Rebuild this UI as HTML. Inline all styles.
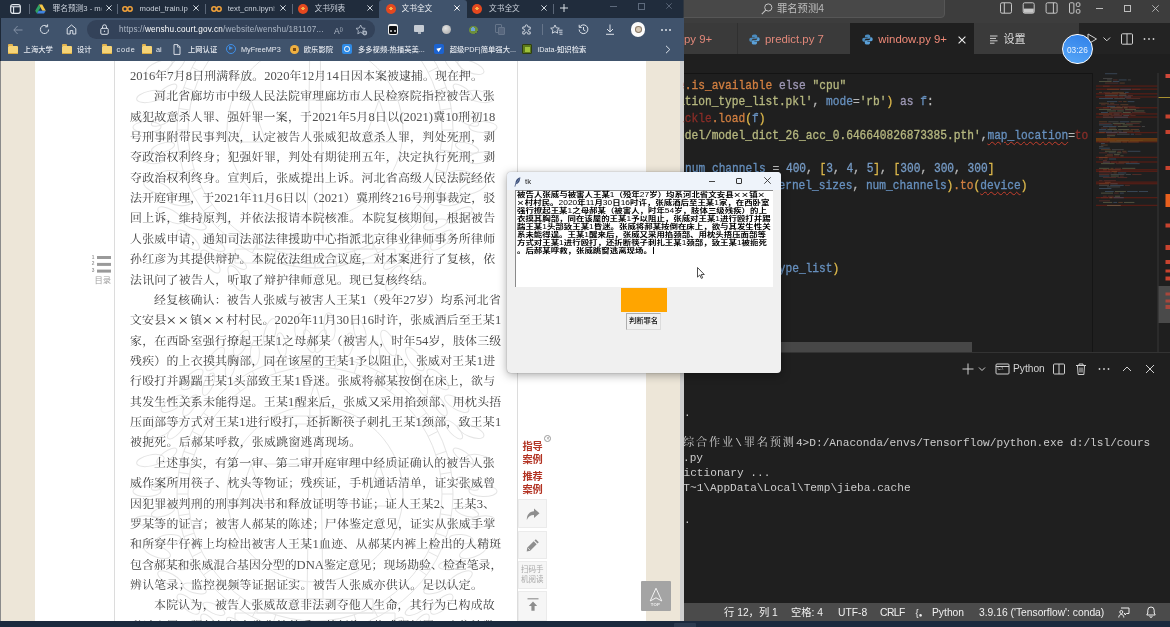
<!DOCTYPE html>
<html lang="zh-CN">
<head>
<meta charset="utf-8">
<title>screenshot</title>
<style>
*{box-sizing:border-box;margin:0;padding:0}
html,body{width:1170px;height:627px;overflow:hidden;background:#1e1e1e}
body{position:relative;font-family:"Liberation Sans","Noto Sans CJK SC",sans-serif;}
.abs{position:absolute}
#edge{position:absolute;left:0;top:0;width:684px;height:621px;background:#fff;overflow:hidden}
#tabbar{position:absolute;left:0;top:0;width:684px;height:18px;background:#202c3c}
#toolbar{position:absolute;left:0;top:18px;width:684px;height:43px;background:#40536c}
#page{position:absolute;left:0;top:61px;width:684px;height:560px;background:#fff;overflow:hidden}
.beige{position:absolute;background:#ede6d8}
.dl{position:absolute;height:20px;line-height:20px;font-family:"Liberation Serif","Noto Serif CJK SC",serif;font-size:11.35px;color:#3c3c3c;white-space:nowrap;text-align:justify;text-align-last:justify;font-weight:400;transform:scaleX(1.049);transform-origin:0 0}
.d{color:#505050;font-size:1.06em}
.fw{display:inline-block;width:1em;text-align:center;font-size:1.5em;line-height:0;vertical-align:-.08em}
.dl .fw{width:.6667em}.tl .fw{width:.6667em;font-weight:400;font-size:1.4em}.td{font-weight:400}
.tl{position:absolute;height:10px;line-height:10px;font-family:"Liberation Sans","Noto Sans CJK SC",sans-serif;font-size:7.1px;color:#000;white-space:nowrap;text-align:justify;text-align-last:justify;font-weight:700;transform:scaleX(1.187);transform-origin:0 0}
#vsc{position:absolute;left:684px;top:0;width:486px;height:621px;background:#1e1e1e;overflow:hidden}
#taskbar{position:absolute;left:0;top:621px;width:1170px;height:6px;background:#1b2a3e}
#tk{position:absolute;left:507px;top:172px;width:274.3px;height:200.6px;background:#f0f0f0;border-radius:4px;box-shadow:0 2px 10px rgba(0,0,0,.35),0 0 1px rgba(0,0,0,.5);overflow:hidden}

#tabbar .t{position:absolute;top:0;height:17px;line-height:17px;font-size:7.7px;color:#c9d0da;white-space:nowrap;overflow:hidden}
#tabbar .x{position:absolute;top:0;height:17px;line-height:17px;font-size:9px;color:#dfe4ea;width:10px;text-align:center;margin-left:-5px}
#tabbar .dv{position:absolute;top:4px;height:10px;width:1px;background:#5b6778}
#tabbar .fav{position:absolute;top:4px;width:10px;height:10px;margin-left:-5px;border-radius:50%}
.court{background:radial-gradient(circle at 50% 45%,#f7b24a 0 22%,#e4481f 24% 100%)}
.colab{position:absolute;top:5.5px;height:6px;width:11px;margin-left:-5.5px}
.ico{position:absolute;overflow:visible}
.bm{position:absolute;top:43px;height:13px;line-height:13px;font-size:7.3px;color:#e6eaf0;white-space:nowrap;font-weight:500}
.fold{position:absolute;top:44.5px;width:10px;height:8.5px;margin-left:-5px;background:#f6d477;border-radius:1px;box-shadow:inset 0 -1px 0 #d9a93f}
.fold:before{content:"";position:absolute;left:0;top:-1.5px;width:4.5px;height:2px;background:#e3b34d;border-radius:1px 1px 0 0}
.bmi{position:absolute;top:44px;width:10px;height:10px;margin-left:-5px;border-radius:2px}

#vsc .ui{position:absolute;white-space:nowrap;color:#d0d0d0;font-size:10.4px}
.code{position:absolute;left:0;height:17px;line-height:17px;font-family:"Liberation Mono",monospace;font-size:12.4px;transform:scaleX(.9046);transform-origin:0 0;white-space:pre;color:#d4d4d4;opacity:.9;-webkit-text-stroke:.3px currentColor}
.term{position:absolute;left:0;height:15px;line-height:15px;font-family:"Liberation Mono","Noto Serif CJK SC",monospace;font-size:11.15px;white-space:pre;color:#cccccc}
.o{color:#e58a45}.k{color:#aca6c6}.s{color:#c6c88a}.b{color:#6f9dd0}.r{color:#962f29}.y{color:#f0c850}.p{color:#c8c8c8}.n{color:#7fa8d6}
.sq{text-decoration:underline wavy #d8432f;text-decoration-thickness:.8px;text-underline-offset:2px}
.sb{position:absolute;top:604.4px;height:18px;line-height:18px;font-size:10.3px;color:#f0f0f0;white-space:nowrap}

.rc{position:absolute;left:522.5px;width:22px;font-size:10.2px;line-height:13.2px;font-weight:700;color:#b23222;white-space:nowrap;letter-spacing:-.2px}
.rb{position:absolute;left:518px;width:28.5px;background:#f6f6f6;border:1px solid #ebebeb}
</style>
</head>
<body style="will-change:transform">
<div id="edge">
  <div id="tabbar">
    <svg class="ico" style="left:9.5px;top:3.5px" width="11" height="10" viewBox="0 0 11 10"><rect x="0.7" y="0.7" width="9.6" height="8.6" rx="2" fill="none" stroke="#e3e8ee" stroke-width="1.2"/><path d="M0.7 2.8H10.3M3.6 2.8V9.3" stroke="#e3e8ee" stroke-width="1.1" fill="none"/></svg>
    <div class="dv" style="left:29px"></div>
    <svg class="ico" style="left:35px;top:3.5px" width="11" height="10" viewBox="0 0 11 10"><path d="M3.8 0.5h3.4l3.6 6.2H7.4z" fill="#f6c646"/><path d="M3.8 0.5L0.2 6.7l1.7 2.9 3.6-6.2z" fill="#2fa463"/><path d="M1.9 9.6l1.7-2.9h7.2L9.1 9.6z" fill="#3f83e0"/></svg>
    <div class="t" style="left:52.5px;width:49px">罪名预测3 - m<span style="opacity:.45">o</span></div>
    <svg class="ico" style="left:105.5px;top:5.3px" width="6" height="6" viewBox="0 0 6 6"><path d="M0.4 0.4l5.2 5.2M5.6 0.4L0.4 5.6" stroke="#d9dfe6" stroke-width=".95"/></svg>
    <div class="dv" style="left:117px"></div>
    <svg class="colab" style="left:127.5px" viewBox="0 0 11 6"><circle cx="3" cy="3" r="2.2" fill="none" stroke="#f2a23a" stroke-width="1.5"/><circle cx="8" cy="3" r="2.2" fill="none" stroke="#f2a23a" stroke-width="1.5"/></svg>
    <div class="t" style="left:139.5px;width:48px">model_train.ip<span style="opacity:.45">y</span></div>
    <svg class="ico" style="left:192.6px;top:5.3px" width="6" height="6" viewBox="0 0 6 6"><path d="M0.4 0.4l5.2 5.2M5.6 0.4L0.4 5.6" stroke="#d9dfe6" stroke-width=".95"/></svg>
    <div class="dv" style="left:204.5px"></div>
    <svg class="colab" style="left:216px" viewBox="0 0 11 6"><circle cx="3" cy="3" r="2.2" fill="none" stroke="#f2a23a" stroke-width="1.5"/><circle cx="8" cy="3" r="2.2" fill="none" stroke="#f2a23a" stroke-width="1.5"/></svg>
    <div class="t" style="left:227.7px;width:47px">text_cnn.ipyn<span style="opacity:.45">b</span></div>
    <svg class="ico" style="left:280.0px;top:5.3px" width="6" height="6" viewBox="0 0 6 6"><path d="M0.4 0.4l5.2 5.2M5.6 0.4L0.4 5.6" stroke="#d9dfe6" stroke-width=".95"/></svg>
    <div class="dv" style="left:292px"></div>
    <div class="fav court" style="left:303px"></div>
    <div class="t" style="left:314.5px;width:40px">文书列表</div>
    <svg class="ico" style="left:367.4px;top:5.3px" width="6" height="6" viewBox="0 0 6 6"><path d="M0.4 0.4l5.2 5.2M5.6 0.4L0.4 5.6" stroke="#d9dfe6" stroke-width=".95"/></svg>
    <div class="abs" style="left:378.8px;top:0;width:88.4px;height:18px;background:#40536c;border-radius:3px 3px 0 0"></div>
    <div class="fav court" style="left:390.5px"></div>
    <div class="t" style="left:401.5px;width:40px;color:#eef1f5">文书全文</div>
    <svg class="ico" style="left:454.0px;top:5.3px" width="6" height="6" viewBox="0 0 6 6"><path d="M0.4 0.4l5.2 5.2M5.6 0.4L0.4 5.6" stroke="#ffffff" stroke-width=".95"/></svg>
    <div class="fav court" style="left:476.6px"></div>
    <div class="t" style="left:489px;width:40px">文书全文</div>
    <svg class="ico" style="left:541.0px;top:5.3px" width="6" height="6" viewBox="0 0 6 6"><path d="M0.4 0.4l5.2 5.2M5.6 0.4L0.4 5.6" stroke="#d9dfe6" stroke-width=".95"/></svg>
    <div class="dv" style="left:553px"></div>
    <svg class="ico" style="left:560px;top:4.2px" width="8" height="8" viewBox="0 0 8 8"><path d="M4 0v8M0 4h8" stroke="#e3e8ee" stroke-width=".95"/></svg>
    <div class="abs" style="left:609.5px;top:6px;width:7px;height:1px;background:#5d6a7c"></div>
    <div class="abs" style="left:637.5px;top:2.5px;width:7px;height:7px;border:1px solid #5d6a7c"></div>
    <svg class="ico" style="left:666px;top:3px" width="6" height="6" viewBox="0 0 6 6"><path d="M0.3 0.3l5.400 5.400M5.700 0.300L0.300 5.700" stroke="#5d6a7c" stroke-width=".9"/></svg>
  </div>
  <div id="toolbar">
    <div class="abs" style="left:0;top:0;width:1px;height:43px;background:#1d2837"></div>
    <!-- nav icons : toolbar local coords, y center 11.5 -->
    <svg class="ico" style="left:12.5px;top:6.5px" width="10" height="10" viewBox="0 0 10 10"><path d="M9.5 5H1M4.6 1L0.8 5l3.8 4" stroke="#8492a6" stroke-width="1" fill="none"/></svg>
    <svg class="ico" style="left:38.5px;top:6px" width="11" height="11" viewBox="0 0 11 11"><path d="M9.6 5.5a4.1 4.1 0 1 1-1.5-3.2" stroke="#dbe1e9" stroke-width="1" fill="none"/><path d="M8.6 0.4v2.4H6.2" stroke="#dbe1e9" stroke-width="1" fill="none"/></svg>
    <svg class="ico" style="left:65.5px;top:6px" width="11" height="11" viewBox="0 0 11 11"><path d="M1.2 10V4.6L5.5 1l4.3 3.6V10H6.8V6.6H4.2V10z" stroke="#dbe1e9" stroke-width="1" fill="none" stroke-linejoin="round"/></svg>
    <div class="abs" style="left:87px;top:2.3px;width:288px;height:18.4px;border-radius:9.2px;background:#334259"></div>
    <svg class="ico" style="left:99.5px;top:6px" width="9" height="11" viewBox="0 0 9 11"><rect x="0.8" y="4.3" width="7.4" height="6" rx="1.2" fill="none" stroke="#dbe1e9" stroke-width="1"/><path d="M2.5 4.3V2.8a2 2 0 0 1 4 0v1.5" stroke="#dbe1e9" stroke-width="1" fill="none"/><circle cx="4.5" cy="7.3" r="0.7" fill="#dbe1e9"/></svg>
    <div class="abs" style="left:119px;top:4px;height:15px;line-height:15px;font-size:8.2px;color:#aeb8c6;white-space:nowrap;letter-spacing:.18px">https://<span style="color:#fff;font-weight:500">wenshu.court.gov.cn</span>/website/wenshu/181107...</div>
    <div class="abs" style="left:334px;top:4px;height:15px;line-height:15px;font-size:8.5px;color:#aeb8c6">A<span style="font-size:5px;vertical-align:3px">))</span></div>
    <svg class="ico" style="left:355px;top:5.5px" width="13" height="12" viewBox="0 0 13 12"><path d="M5.6 1l1.4 3 3.2.4-2.4 2.2.6 3.2-2.8-1.6-2.8 1.6.6-3.2L1 4.4 4.2 4z" stroke="#aeb8c6" stroke-width=".9" fill="none" stroke-linejoin="round"/><circle cx="9.8" cy="9" r="2.4" fill="#aeb8c6"/><path d="M9.8 7.8v2.4M8.6 9H11" stroke="#334259" stroke-width=".7"/></svg>
    <!-- extensions -->
    <div class="abs" style="left:387.5px;top:6px;width:10.5px;height:10.5px;border-radius:2.5px;background:#0d0f12;border:1px solid #f2f2f2;border-top-width:2.5px"></div>
    <div class="abs" style="left:389.6px;top:11.6px;width:2.2px;height:2.2px;border-radius:50%;background:#ddd"></div>
    <div class="abs" style="left:393.6px;top:11.6px;width:2.2px;height:2.2px;border-radius:50%;background:#ddd"></div>
    <div class="abs" style="left:414px;top:7px;width:10px;height:7px;background:#c6ccd4;border-radius:1px"></div>
    <div class="abs" style="left:417.5px;top:14px;width:3px;height:2px;background:#aab2bd"></div>
    <div class="abs" style="left:441.5px;top:7px;width:9px;height:9px;border-radius:50%;background:radial-gradient(circle at 40% 35%,#e4e4e4,#a4a4a4)"></div>
    <div class="abs" style="left:468.5px;top:7.5px;width:9.5px;height:8px;border-radius:50%;background:radial-gradient(circle at 45% 40%,#6fa3d8 0 30%,#6c8f3c 32% 70%,#3c4a2c 72%)"></div>
    <div class="abs" style="left:495px;top:6px;width:7px;height:9px;border:1px solid #66758a;border-radius:1px"></div>
    <div class="abs" style="left:498px;top:8.5px;width:7px;height:8px;border:1px solid #66758a;border-radius:1px;background:#56657c"></div>
    <svg class="ico" style="left:521px;top:6px" width="11" height="11" viewBox="0 0 11 11"><path d="M4.2 2.2a1.3 1.3 0 0 1 2.6 0V3h2.4v2.3h-.6a1.3 1.3 0 0 0 0 2.6h.6V10H6.6V9.4a1.3 1.3 0 0 0-2.6 0V10H1.8V7.6H2.4a1.3 1.3 0 0 0 0-2.6H1.8V3h2.4z" stroke="#dbe1e9" stroke-width=".9" fill="none" stroke-linejoin="round"/></svg>
    <div class="abs" style="left:541.5px;top:6px;width:1px;height:11px;background:#66758a"></div>
    <svg class="ico" style="left:550px;top:5.5px" width="13" height="12" viewBox="0 0 13 12"><path d="M5 1l1.3 2.8 3 .4-2.2 2 .6 3-2.7-1.5L2.3 9.2l.6-3-2.2-2 3-.4z" stroke="#dbe1e9" stroke-width=".9" fill="none" stroke-linejoin="round"/><path d="M8.5 6.2h4M9 8.2h3.5M9.5 10.2h3" stroke="#dbe1e9" stroke-width=".9"/></svg>
    <svg class="ico" style="left:577.5px;top:6px" width="11" height="11" viewBox="0 0 11 11"><path d="M1.6 3.2A4.4 4.4 0 1 1 1.1 5.5" stroke="#dbe1e9" stroke-width="1" fill="none"/><path d="M1.2 0.8v2.6h2.6" stroke="#dbe1e9" stroke-width="1" fill="none"/><path d="M5.5 3v2.8l1.8 1" stroke="#dbe1e9" stroke-width="1" fill="none"/></svg>
    <svg class="ico" style="left:605px;top:6px" width="10" height="11" viewBox="0 0 10 11"><path d="M5 0.5v7M2 5l3 3 3-3M1 10.3h8" stroke="#dbe1e9" stroke-width="1" fill="none"/></svg>
    <div class="abs" style="left:631px;top:4.3px;width:14.4px;height:14.4px;border-radius:50%;background:#fbfbfb"></div>
    <div class="abs" style="left:634.5px;top:8px;width:7.5px;height:7px;border-radius:45%;background:#d9cbb8;border:1px solid #8a7a68"></div>
    <div class="abs" style="left:660.5px;top:10.5px;width:2px;height:2px;border-radius:50%;background:#dbe1e9;box-shadow:4px 0 0 #dbe1e9,8px 0 0 #dbe1e9"></div>
    <!-- bookmarks: toolbar-local top = y-18 -->
    <div class="fold" style="left:13.3px;top:27.8px"></div><div class="bm" style="left:23.6px;top:25.2px">上海大学</div>
    <div class="fold" style="left:67px;top:27.8px"></div><div class="bm" style="left:77px;top:25.2px">设计</div>
    <div class="fold" style="left:107px;top:27.8px"></div><div class="bm" style="left:116.5px;top:25.2px;letter-spacing:.8px">code</div>
    <div class="fold" style="left:146.6px;top:27.8px"></div><div class="bm" style="left:156px;top:25.2px">ai</div>
    <svg class="ico" style="left:172.5px;top:25.5px" width="8" height="11" viewBox="0 0 8 11"><path d="M1 0.6h3.8L7 2.9v7.5H1z" fill="none" stroke="#e6eaf0" stroke-width=".9"/><path d="M4.6 0.8v2.3H7" fill="none" stroke="#e6eaf0" stroke-width=".8"/></svg>
    <div class="bm" style="left:188px;top:25.2px">上网认证</div>
    <div class="abs" style="left:225.7px;top:26px;width:10px;height:10px;border-radius:50%;border:1.2px solid #3f8fe8"></div><div class="abs" style="left:229.4px;top:28.4px;width:0;height:0;border-left:4px solid #3f8fe8;border-top:2.6px solid transparent;border-bottom:2.6px solid transparent"></div>
    <div class="bm" style="left:241px;top:25.2px">MyFreeMP3</div>
    <div class="abs" style="left:289.5px;top:26.5px;width:9px;height:9px;border-radius:50%;background:radial-gradient(circle,#7a4a10 0 25%,#f0b040 27% 100%)"></div>
    <div class="bm" style="left:303.8px;top:25.2px">欧乐影院</div>
    <div class="abs" style="left:342px;top:26px;width:10px;height:10px;border-radius:2px;background:#2f8be6"></div><div class="abs" style="left:344.3px;top:28.2px;width:5.4px;height:5.4px;border-radius:50%;border:1px solid #fff"></div>
    <div class="bm" style="left:358px;top:25.2px">多多视频-热播英美...</div>
    <div class="abs" style="left:434px;top:26px;width:10px;height:10px;border-radius:2px;background:#1c63d0"></div><div class="abs" style="left:437px;top:28.5px;width:0;height:0;border-left:5px solid #fff;border-top:2.4px solid transparent;border-bottom:2.4px solid transparent;transform:rotate(-35deg)"></div>
    <div class="bm" style="left:449.7px;top:25.2px">超级PDF|简单强大...</div>
    <div class="abs" style="left:522px;top:26px;width:10px;height:10px;border-radius:1px;background:#5d7a1c;border:1px solid #2e3d10"></div><div class="abs" style="left:524.5px;top:28.5px;width:5px;height:5px;background:#9fc23a"></div>
    <div class="bm" style="left:537.6px;top:25.2px">iData-知识检索</div>
    <svg class="ico" style="left:665px;top:27px" width="6" height="9" viewBox="0 0 6 9"><path d="M1 0.8l3.8 3.7L1 8.2" stroke="#dbe1e9" stroke-width="1" fill="none"/></svg>
  </div>
</div>
<!-- page content (positions are absolute to body) -->
<div class="abs" style="left:0;top:61px;width:1px;height:560px;background:#8b8b8b"></div>
<div class="beige" style="left:1px;top:61px;width:34px;height:560px"></div>
<div class="beige" style="left:646px;top:61px;width:34px;height:560px"></div>
<div class="abs" style="left:680px;top:61px;width:4px;height:560px;background:#cfcfcf"></div>
<div class="abs" style="left:114px;top:61px;width:1px;height:560px;background:#dcdcdc"></div>
<div class="abs" style="left:517px;top:61px;width:1px;height:560px;background:#dcdcdc"></div>
<svg class="abs" style="left:115px;top:61px" width="402" height="560" viewBox="115 61 402 560" fill="none" stroke="#e4e4e4" stroke-width="1"><circle cx="315" cy="130" r="138"/><circle cx="315" cy="130" r="127"/><circle cx="315" cy="130" r="88"/><path d="M442.0 130.0L453.0 130.0"/><path d="M440.4 149.9L451.3 151.6"/><path d="M435.8 169.2L446.2 172.6"/><path d="M428.2 187.7L438.0 192.7"/><path d="M417.7 204.6L426.6 211.1"/><path d="M404.8 219.8L412.6 227.6"/><path d="M389.6 232.7L396.1 241.6"/><path d="M372.7 243.2L377.7 253.0"/><path d="M354.2 250.8L357.6 261.2"/><path d="M334.9 255.4L336.6 266.3"/><path d="M315.0 257.0L315.0 268.0"/><path d="M295.1 255.4L293.4 266.3"/><path d="M275.8 250.8L272.4 261.2"/><path d="M257.3 243.2L252.3 253.0"/><path d="M240.4 232.7L233.9 241.6"/><path d="M225.2 219.8L217.4 227.6"/><path d="M212.3 204.6L203.4 211.1"/><path d="M201.8 187.7L192.0 192.7"/><path d="M194.2 169.2L183.8 172.6"/><path d="M189.6 149.9L178.7 151.6"/><path d="M188.0 130.0L177.0 130.0"/><path d="M189.6 110.1L178.7 108.4"/><path d="M194.2 90.8L183.8 87.4"/><path d="M201.8 72.3L192.0 67.3"/><path d="M212.3 55.4L203.4 48.9"/><path d="M225.2 40.2L217.4 32.4"/><path d="M240.4 27.3L233.9 18.4"/><path d="M257.3 16.8L252.3 7.0"/><path d="M275.8 9.2L272.4 -1.2"/><path d="M295.1 4.6L293.4 -6.3"/><path d="M315.0 3.0L315.0 -8.0"/><path d="M334.9 4.6L336.6 -6.3"/><path d="M354.2 9.2L357.6 -1.2"/><path d="M372.7 16.8L377.7 7.0"/><path d="M389.6 27.3L396.1 18.4"/><path d="M404.8 40.2L412.6 32.4"/><path d="M417.7 55.4L426.6 48.9"/><path d="M428.2 72.3L438.0 67.3"/><path d="M435.8 90.8L446.2 87.4"/><path d="M440.4 110.1L451.3 108.4"/><path d="M307 235L310 35L315 18L320 35L323 235z"/><path d="M283 52h64M289 60h52"/><path d="M251 100h128M251 100l-15 42h30zM379 100l-15 42h30z"/><path d="M257 235h116v14h-116zM235 249h160v14h-160z"/><ellipse cx="236.1" cy="278.3" rx="5.5" ry="14" transform="rotate(152 236.1 278.3)"/><ellipse cx="236.5" cy="261.3" rx="4.5" ry="12" transform="rotate(127 236.5 261.3)"/><ellipse cx="210.4" cy="261.5" rx="5.5" ry="14" transform="rotate(142 210.4 261.5)"/><ellipse cx="213.9" cy="244.8" rx="4.5" ry="12" transform="rotate(116 213.9 244.8)"/><ellipse cx="188.2" cy="240.2" rx="5.5" ry="14" transform="rotate(131 188.2 240.2)"/><ellipse cx="194.7" cy="224.5" rx="4.5" ry="12" transform="rotate(106 194.7 224.5)"/><ellipse cx="170.2" cy="215.3" rx="5.5" ry="14" transform="rotate(120 170.2 215.3)"/><ellipse cx="179.5" cy="201.0" rx="4.5" ry="12" transform="rotate(96 179.5 201.0)"/><ellipse cx="157.1" cy="187.5" rx="5.5" ry="14" transform="rotate(110 157.1 187.5)"/><ellipse cx="168.8" cy="175.1" rx="4.5" ry="12" transform="rotate(85 168.8 175.1)"/><ellipse cx="149.3" cy="157.7" rx="5.5" ry="14" transform="rotate(100 149.3 157.7)"/><ellipse cx="163.0" cy="147.7" rx="4.5" ry="12" transform="rotate(74 163.0 147.7)"/><ellipse cx="147.0" cy="127.1" rx="5.5" ry="14" transform="rotate(89 147.0 127.1)"/><ellipse cx="162.3" cy="119.7" rx="4.5" ry="12" transform="rotate(64 162.3 119.7)"/><ellipse cx="150.4" cy="96.5" rx="5.5" ry="14" transform="rotate(78 150.4 96.5)"/><ellipse cx="166.8" cy="92.0" rx="4.5" ry="12" transform="rotate(54 166.8 92.0)"/><ellipse cx="159.2" cy="67.1" rx="5.5" ry="14" transform="rotate(68 159.2 67.1)"/><ellipse cx="176.2" cy="65.7" rx="4.5" ry="12" transform="rotate(43 176.2 65.7)"/><ellipse cx="173.3" cy="39.7" rx="5.5" ry="14" transform="rotate(58 173.3 39.7)"/><ellipse cx="190.2" cy="41.4" rx="4.5" ry="12" transform="rotate(32 190.2 41.4)"/><ellipse cx="192.1" cy="15.4" rx="5.5" ry="14" transform="rotate(47 192.1 15.4)"/><ellipse cx="208.5" cy="20.2" rx="4.5" ry="12" transform="rotate(22 208.5 20.2)"/><ellipse cx="215.1" cy="-5.0" rx="5.5" ry="14" transform="rotate(36 215.1 -5.0)"/><ellipse cx="230.3" cy="2.6" rx="4.5" ry="12" transform="rotate(12 230.3 2.6)"/><ellipse cx="241.4" cy="-21.0" rx="5.5" ry="14" transform="rotate(26 241.4 -21.0)"/><ellipse cx="254.9" cy="-10.7" rx="4.5" ry="12" transform="rotate(1 254.9 -10.7)"/><ellipse cx="270.1" cy="-31.9" rx="5.5" ry="14" transform="rotate(16 270.1 -31.9)"/><ellipse cx="281.5" cy="-19.3" rx="4.5" ry="12" transform="rotate(-10 281.5 -19.3)"/><ellipse cx="300.4" cy="-37.4" rx="5.5" ry="14" transform="rotate(5 300.4 -37.4)"/><ellipse cx="309.3" cy="-22.9" rx="4.5" ry="12" transform="rotate(-20 309.3 -22.9)"/><ellipse cx="393.9" cy="278.3" rx="5.5" ry="14" transform="rotate(-152 393.9 278.3)"/><ellipse cx="393.5" cy="261.3" rx="4.5" ry="12" transform="rotate(-127 393.5 261.3)"/><ellipse cx="419.6" cy="261.5" rx="5.5" ry="14" transform="rotate(-142 419.6 261.5)"/><ellipse cx="416.1" cy="244.8" rx="4.5" ry="12" transform="rotate(-116 416.1 244.8)"/><ellipse cx="441.8" cy="240.2" rx="5.5" ry="14" transform="rotate(-131 441.8 240.2)"/><ellipse cx="435.3" cy="224.5" rx="4.5" ry="12" transform="rotate(-106 435.3 224.5)"/><ellipse cx="459.8" cy="215.3" rx="5.5" ry="14" transform="rotate(-120 459.8 215.3)"/><ellipse cx="450.5" cy="201.0" rx="4.5" ry="12" transform="rotate(-96 450.5 201.0)"/><ellipse cx="472.9" cy="187.5" rx="5.5" ry="14" transform="rotate(-110 472.9 187.5)"/><ellipse cx="461.2" cy="175.1" rx="4.5" ry="12" transform="rotate(-85 461.2 175.1)"/><ellipse cx="480.7" cy="157.7" rx="5.5" ry="14" transform="rotate(-100 480.7 157.7)"/><ellipse cx="467.0" cy="147.7" rx="4.5" ry="12" transform="rotate(-74 467.0 147.7)"/><ellipse cx="483.0" cy="127.1" rx="5.5" ry="14" transform="rotate(-89 483.0 127.1)"/><ellipse cx="467.7" cy="119.7" rx="4.5" ry="12" transform="rotate(-64 467.7 119.7)"/><ellipse cx="479.6" cy="96.5" rx="5.5" ry="14" transform="rotate(-78 479.6 96.5)"/><ellipse cx="463.2" cy="92.0" rx="4.5" ry="12" transform="rotate(-54 463.2 92.0)"/><ellipse cx="470.8" cy="67.1" rx="5.5" ry="14" transform="rotate(-68 470.8 67.1)"/><ellipse cx="453.8" cy="65.7" rx="4.5" ry="12" transform="rotate(-43 453.8 65.7)"/><ellipse cx="456.7" cy="39.7" rx="5.5" ry="14" transform="rotate(-58 456.7 39.7)"/><ellipse cx="439.8" cy="41.4" rx="4.5" ry="12" transform="rotate(-32 439.8 41.4)"/><ellipse cx="437.9" cy="15.4" rx="5.5" ry="14" transform="rotate(-47 437.9 15.4)"/><ellipse cx="421.5" cy="20.2" rx="4.5" ry="12" transform="rotate(-22 421.5 20.2)"/><ellipse cx="414.9" cy="-5.0" rx="5.5" ry="14" transform="rotate(-36 414.9 -5.0)"/><ellipse cx="399.7" cy="2.6" rx="4.5" ry="12" transform="rotate(-12 399.7 2.6)"/><ellipse cx="388.6" cy="-21.0" rx="5.5" ry="14" transform="rotate(-26 388.6 -21.0)"/><ellipse cx="375.1" cy="-10.7" rx="4.5" ry="12" transform="rotate(-1 375.1 -10.7)"/><ellipse cx="359.9" cy="-31.9" rx="5.5" ry="14" transform="rotate(-16 359.9 -31.9)"/><ellipse cx="348.5" cy="-19.3" rx="4.5" ry="12" transform="rotate(10 348.5 -19.3)"/><ellipse cx="329.6" cy="-37.4" rx="5.5" ry="14" transform="rotate(-5 329.6 -37.4)"/><ellipse cx="320.7" cy="-22.9" rx="4.5" ry="12" transform="rotate(20 320.7 -22.9)"/><circle cx="315" cy="494" r="138"/><circle cx="315" cy="494" r="127"/><circle cx="315" cy="494" r="88"/><path d="M442.0 494.0L453.0 494.0"/><path d="M440.4 513.9L451.3 515.6"/><path d="M435.8 533.2L446.2 536.6"/><path d="M428.2 551.7L438.0 556.7"/><path d="M417.7 568.6L426.6 575.1"/><path d="M404.8 583.8L412.6 591.6"/><path d="M389.6 596.7L396.1 605.6"/><path d="M372.7 607.2L377.7 617.0"/><path d="M354.2 614.8L357.6 625.2"/><path d="M334.9 619.4L336.6 630.3"/><path d="M315.0 621.0L315.0 632.0"/><path d="M295.1 619.4L293.4 630.3"/><path d="M275.8 614.8L272.4 625.2"/><path d="M257.3 607.2L252.3 617.0"/><path d="M240.4 596.7L233.9 605.6"/><path d="M225.2 583.8L217.4 591.6"/><path d="M212.3 568.6L203.4 575.1"/><path d="M201.8 551.7L192.0 556.7"/><path d="M194.2 533.2L183.8 536.6"/><path d="M189.6 513.9L178.7 515.6"/><path d="M188.0 494.0L177.0 494.0"/><path d="M189.6 474.1L178.7 472.4"/><path d="M194.2 454.8L183.8 451.4"/><path d="M201.8 436.3L192.0 431.3"/><path d="M212.3 419.4L203.4 412.9"/><path d="M225.2 404.2L217.4 396.4"/><path d="M240.4 391.3L233.9 382.4"/><path d="M257.3 380.8L252.3 371.0"/><path d="M275.8 373.2L272.4 362.8"/><path d="M295.1 368.6L293.4 357.7"/><path d="M315.0 367.0L315.0 356.0"/><path d="M334.9 368.6L336.6 357.7"/><path d="M354.2 373.2L357.6 362.8"/><path d="M372.7 380.8L377.7 371.0"/><path d="M389.6 391.3L396.1 382.4"/><path d="M404.8 404.2L412.6 396.4"/><path d="M417.7 419.4L426.6 412.9"/><path d="M428.2 436.3L438.0 431.3"/><path d="M435.8 454.8L446.2 451.4"/><path d="M440.4 474.1L451.3 472.4"/><path d="M307 599L310 399L315 382L320 399L323 599z"/><path d="M283 416h64M289 424h52"/><path d="M251 464h128M251 464l-15 42h30zM379 464l-15 42h30z"/><path d="M257 599h116v14h-116zM235 613h160v14h-160z"/><ellipse cx="236.1" cy="642.3" rx="5.5" ry="14" transform="rotate(152 236.1 642.3)"/><ellipse cx="236.5" cy="625.3" rx="4.5" ry="12" transform="rotate(127 236.5 625.3)"/><ellipse cx="210.4" cy="625.5" rx="5.5" ry="14" transform="rotate(142 210.4 625.5)"/><ellipse cx="213.9" cy="608.8" rx="4.5" ry="12" transform="rotate(116 213.9 608.8)"/><ellipse cx="188.2" cy="604.2" rx="5.5" ry="14" transform="rotate(131 188.2 604.2)"/><ellipse cx="194.7" cy="588.5" rx="4.5" ry="12" transform="rotate(106 194.7 588.5)"/><ellipse cx="170.2" cy="579.3" rx="5.5" ry="14" transform="rotate(120 170.2 579.3)"/><ellipse cx="179.5" cy="565.0" rx="4.5" ry="12" transform="rotate(96 179.5 565.0)"/><ellipse cx="157.1" cy="551.5" rx="5.5" ry="14" transform="rotate(110 157.1 551.5)"/><ellipse cx="168.8" cy="539.1" rx="4.5" ry="12" transform="rotate(85 168.8 539.1)"/><ellipse cx="149.3" cy="521.7" rx="5.5" ry="14" transform="rotate(100 149.3 521.7)"/><ellipse cx="163.0" cy="511.7" rx="4.5" ry="12" transform="rotate(74 163.0 511.7)"/><ellipse cx="147.0" cy="491.1" rx="5.5" ry="14" transform="rotate(89 147.0 491.1)"/><ellipse cx="162.3" cy="483.7" rx="4.5" ry="12" transform="rotate(64 162.3 483.7)"/><ellipse cx="150.4" cy="460.5" rx="5.5" ry="14" transform="rotate(78 150.4 460.5)"/><ellipse cx="166.8" cy="456.0" rx="4.5" ry="12" transform="rotate(54 166.8 456.0)"/><ellipse cx="159.2" cy="431.1" rx="5.5" ry="14" transform="rotate(68 159.2 431.1)"/><ellipse cx="176.2" cy="429.7" rx="4.5" ry="12" transform="rotate(43 176.2 429.7)"/><ellipse cx="173.3" cy="403.7" rx="5.5" ry="14" transform="rotate(58 173.3 403.7)"/><ellipse cx="190.2" cy="405.4" rx="4.5" ry="12" transform="rotate(32 190.2 405.4)"/><ellipse cx="192.1" cy="379.4" rx="5.5" ry="14" transform="rotate(47 192.1 379.4)"/><ellipse cx="208.5" cy="384.2" rx="4.5" ry="12" transform="rotate(22 208.5 384.2)"/><ellipse cx="215.1" cy="359.0" rx="5.5" ry="14" transform="rotate(36 215.1 359.0)"/><ellipse cx="230.3" cy="366.6" rx="4.5" ry="12" transform="rotate(12 230.3 366.6)"/><ellipse cx="241.4" cy="343.0" rx="5.5" ry="14" transform="rotate(26 241.4 343.0)"/><ellipse cx="254.9" cy="353.3" rx="4.5" ry="12" transform="rotate(1 254.9 353.3)"/><ellipse cx="270.1" cy="332.1" rx="5.5" ry="14" transform="rotate(16 270.1 332.1)"/><ellipse cx="281.5" cy="344.7" rx="4.5" ry="12" transform="rotate(-10 281.5 344.7)"/><ellipse cx="300.4" cy="326.6" rx="5.5" ry="14" transform="rotate(5 300.4 326.6)"/><ellipse cx="309.3" cy="341.1" rx="4.5" ry="12" transform="rotate(-20 309.3 341.1)"/><ellipse cx="393.9" cy="642.3" rx="5.5" ry="14" transform="rotate(-152 393.9 642.3)"/><ellipse cx="393.5" cy="625.3" rx="4.5" ry="12" transform="rotate(-127 393.5 625.3)"/><ellipse cx="419.6" cy="625.5" rx="5.5" ry="14" transform="rotate(-142 419.6 625.5)"/><ellipse cx="416.1" cy="608.8" rx="4.5" ry="12" transform="rotate(-116 416.1 608.8)"/><ellipse cx="441.8" cy="604.2" rx="5.5" ry="14" transform="rotate(-131 441.8 604.2)"/><ellipse cx="435.3" cy="588.5" rx="4.5" ry="12" transform="rotate(-106 435.3 588.5)"/><ellipse cx="459.8" cy="579.3" rx="5.5" ry="14" transform="rotate(-120 459.8 579.3)"/><ellipse cx="450.5" cy="565.0" rx="4.5" ry="12" transform="rotate(-96 450.5 565.0)"/><ellipse cx="472.9" cy="551.5" rx="5.5" ry="14" transform="rotate(-110 472.9 551.5)"/><ellipse cx="461.2" cy="539.1" rx="4.5" ry="12" transform="rotate(-85 461.2 539.1)"/><ellipse cx="480.7" cy="521.7" rx="5.5" ry="14" transform="rotate(-100 480.7 521.7)"/><ellipse cx="467.0" cy="511.7" rx="4.5" ry="12" transform="rotate(-74 467.0 511.7)"/><ellipse cx="483.0" cy="491.1" rx="5.5" ry="14" transform="rotate(-89 483.0 491.1)"/><ellipse cx="467.7" cy="483.7" rx="4.5" ry="12" transform="rotate(-64 467.7 483.7)"/><ellipse cx="479.6" cy="460.5" rx="5.5" ry="14" transform="rotate(-78 479.6 460.5)"/><ellipse cx="463.2" cy="456.0" rx="4.5" ry="12" transform="rotate(-54 463.2 456.0)"/><ellipse cx="470.8" cy="431.1" rx="5.5" ry="14" transform="rotate(-68 470.8 431.1)"/><ellipse cx="453.8" cy="429.7" rx="4.5" ry="12" transform="rotate(-43 453.8 429.7)"/><ellipse cx="456.7" cy="403.7" rx="5.5" ry="14" transform="rotate(-58 456.7 403.7)"/><ellipse cx="439.8" cy="405.4" rx="4.5" ry="12" transform="rotate(-32 439.8 405.4)"/><ellipse cx="437.9" cy="379.4" rx="5.5" ry="14" transform="rotate(-47 437.9 379.4)"/><ellipse cx="421.5" cy="384.2" rx="4.5" ry="12" transform="rotate(-22 421.5 384.2)"/><ellipse cx="414.9" cy="359.0" rx="5.5" ry="14" transform="rotate(-36 414.9 359.0)"/><ellipse cx="399.7" cy="366.6" rx="4.5" ry="12" transform="rotate(-12 399.7 366.6)"/><ellipse cx="388.6" cy="343.0" rx="5.5" ry="14" transform="rotate(-26 388.6 343.0)"/><ellipse cx="375.1" cy="353.3" rx="4.5" ry="12" transform="rotate(-1 375.1 353.3)"/><ellipse cx="359.9" cy="332.1" rx="5.5" ry="14" transform="rotate(-16 359.9 332.1)"/><ellipse cx="348.5" cy="344.7" rx="4.5" ry="12" transform="rotate(10 348.5 344.7)"/><ellipse cx="329.6" cy="326.6" rx="5.5" ry="14" transform="rotate(-5 329.6 326.6)"/><ellipse cx="320.7" cy="341.1" rx="4.5" ry="12" transform="rotate(20 320.7 341.1)"/></svg>
<!-- right tool column -->
<div class="abs" style="left:544.4px;top:435.3px;width:7px;height:7px;border-radius:50%;border:.8px solid #999;background:#fff;font-size:5px;line-height:5.2px;text-align:center;color:#888">×</div>
<div class="rc" style="top:439.8px">指导<br>案例</div>
<div class="rc" style="top:470.2px">推荐<br>案例</div>
<div class="rb" style="top:499.2px;height:29.2px"></div>
<svg class="ico" style="left:526px;top:507.5px" width="14" height="13" viewBox="0 0 14 13"><path d="M8 0.500l5.500 4.700L8 9.900V7.100C4.500 7 2.300 8.600 0.800 12c0-5 2.500-8.300 7.200-8.700z" fill="#8e8e8e"/></svg>
<div class="rb" style="top:530.6px;height:28.2px"></div>
<svg class="ico" style="left:526px;top:538px" width="14" height="14" viewBox="0 0 14 14"><path d="M9.800 1.200l3 3-1.300 1.300-3-3zM7.700 3.300l3 3-6.500 6.500-3.500.6.500-3.600z" fill="#8e8e8e"/><path d="M2.200 10.200l1.700 1.700" stroke="#f6f6f6" stroke-width=".7"/></svg>
<div class="rb" style="top:560.6px;height:28.8px"></div>
<div class="abs" style="left:518px;top:565.4px;width:28.5px;text-align:center;font-size:7.5px;line-height:9.2px;color:#a8a8a8;white-space:nowrap">扫码手<br>机阅读</div>
<div class="rb" style="top:591.2px;height:30px"></div>
<svg class="ico" style="left:526.5px;top:597.5px" width="12" height="14" viewBox="0 0 12 14"><path d="M0.500 0.800h11" stroke="#8e8e8e" stroke-width="1.100"/><path d="M6 3.500l4.200 4.600H7.600v4.700H4.400V8.100H1.800z" fill="#8e8e8e"/></svg>
<!-- TOP button -->
<div class="abs" style="left:640.5px;top:581.2px;width:30px;height:29.8px;background:#a4a4a4;border-radius:1px"></div>
<svg class="ico" style="left:648.5px;top:586.5px" width="14" height="15" viewBox="0 0 14 15"><path d="M7 1.200L12.800 14 7 10.800 1.200 14z" fill="none" stroke="#f4f4f4" stroke-width="1" stroke-linejoin="round"/></svg>
<div class="abs" style="left:640.5px;top:601.8px;width:30px;text-align:center;font-size:4.3px;line-height:5px;color:#f0f0f0;font-weight:700;letter-spacing:.2px">TOP</div>
<!-- left toc icon -->
<div class="abs" style="left:97.3px;top:256px;width:13.7px;height:3px;background:#9a9a9a;box-shadow:0 6.9px 0 #9a9a9a,0 13.6px 0 #9a9a9a"></div>
<div class="abs" style="left:90.500px;top:254.500px;width:5px;font-size:4.800px;line-height:6.850px;color:#9a9a9a;font-weight:700;text-align:center">1<br>2<br>3</div>
<div class="abs" style="left:94.500px;top:274.500px;font-size:8.300px;line-height:10px;color:#a0a0a0;white-space:nowrap">目录</div>
<div class="dl" style="left:129.60px;top:65.80px;width:336.44px"><span class="d">2016</span>年<span class="d">7</span>月<span class="d">8</span>日刑满释放。<span class="d">2020</span>年<span class="d">12</span>月<span class="d">14</span>日因本案被逮捕。现在押。</div>
<div class="dl" style="left:153.94px;top:86.17px;width:324.84px">河北省廊坊市中级人民法院审理廊坊市人民检察院指控被告人张</div>
<div class="dl" style="left:129.60px;top:106.54px;width:348.05px">威犯故意杀人罪、强奸罪一案，于<span class="d">2021</span>年<span class="d">5</span>月<span class="d">8</span>日以<span class="d">(2021)</span>冀<span class="d">10</span>刑初<span class="d">18</span></div>
<div class="dl" style="left:129.60px;top:126.91px;width:348.05px">号刑事附带民事判决，认定被告人张威犯故意杀人罪，判处死刑，剥</div>
<div class="dl" style="left:129.60px;top:147.28px;width:348.05px">夺政治权利终身；犯强奸罪，判处有期徒刑五年，决定执行死刑，剥</div>
<div class="dl" style="left:129.60px;top:167.65px;width:348.05px">夺政治权利终身。宣判后，张威提出上诉。河北省高级人民法院经依</div>
<div class="dl" style="left:129.60px;top:188.02px;width:348.05px">法开庭审理，于<span class="d">2021</span>年<span class="d">11</span>月<span class="d">6</span>日以（<span class="d">2021</span>）冀刑终<span class="d">216</span>号刑事裁定，驳</div>
<div class="dl" style="left:129.60px;top:208.39px;width:348.05px">回上诉，维持原判，并依法报请本院核准。本院复核期间，根据被告</div>
<div class="dl" style="left:129.60px;top:228.76px;width:348.05px">人张威申请，通知司法部法律援助中心指派北京律业律师事务所律师</div>
<div class="dl" style="left:129.60px;top:249.13px;width:348.05px">孙红彦为其提供辩护。本院依法组成合议庭，对本案进行了复核，依</div>
<div class="dl" style="left:129.60px;top:269.50px;width:290.04px">法讯问了被告人，听取了辩护律师意见。现已复核终结。</div>
<div class="dl" style="left:153.94px;top:289.87px;width:330.64px">经复核确认：被告人张威与被害人王某<span class="d">1</span>（殁年<span class="d">27</span>岁）均系河北省</div>
<div class="dl" style="left:129.60px;top:310.24px;width:353.85px">文安县<span class="fw">×</span><span class="fw">×</span>镇<span class="fw">×</span><span class="fw">×</span>村村民。<span class="d">2020</span>年<span class="d">11</span>月<span class="d">30</span>日<span class="d">16</span>时许，张威酒后至王某<span class="d">1</span></div>
<div class="dl" style="left:129.60px;top:330.61px;width:353.85px">家，在西卧室强行撩起王某<span class="d">1</span>之母郝某（被害人，时年<span class="d">54</span>岁，肢体三级</div>
<div class="dl" style="left:129.60px;top:350.98px;width:348.05px">残疾）的上衣摸其胸部，同在该屋的王某<span class="d">1</span>予以阻止，张威对王某<span class="d">1</span>进</div>
<div class="dl" style="left:129.60px;top:371.35px;width:348.05px">行殴打并踢踹王某<span class="d">1</span>头部致王某<span class="d">1</span>昏迷。张威将郝某按倒在床上，欲与</div>
<div class="dl" style="left:129.60px;top:391.72px;width:353.85px">其发生性关系未能得逞。王某<span class="d">1</span>醒来后，张威又采用掐颈部、用枕头捂</div>
<div class="dl" style="left:129.60px;top:412.09px;width:353.85px">压面部等方式对王某<span class="d">1</span>进行殴打，还折断筷子刺扎王某<span class="d">1</span>颈部，致王某<span class="d">1</span></div>
<div class="dl" style="left:129.60px;top:432.46px;width:220.43px">被扼死。后郝某呼救，张威跳窗逃离现场。</div>
<div class="dl" style="left:153.94px;top:452.83px;width:324.84px">上述事实，有第一审、第二审开庭审理中经质证确认的被告人张</div>
<div class="dl" style="left:129.60px;top:473.20px;width:348.05px">威作案所用筷子、枕头等物证；残疾证，手机通话清单，证实张威曾</div>
<div class="dl" style="left:129.60px;top:493.57px;width:348.05px">因犯罪被判刑的刑事判决书和释放证明等书证；证人王某<span class="d">2</span>、王某<span class="d">3</span>、</div>
<div class="dl" style="left:129.60px;top:513.94px;width:348.05px">罗某等的证言；被害人郝某的陈述；尸体鉴定意见，证实从张威手掌</div>
<div class="dl" style="left:129.60px;top:534.31px;width:353.85px">和所穿牛仔裤上均检出被害人王某<span class="d">1</span>血迹、从郝某内裤上检出的人精斑</div>
<div class="dl" style="left:129.60px;top:554.68px;width:353.85px">包含郝某和张威混合基因分型的<span class="d">DNA</span>鉴定意见；现场勘验、检查笔录，</div>
<div class="dl" style="left:129.60px;top:575.05px;width:336.44px">辨认笔录；监控视频等证据证实。被告人张威亦供认。足以认定。</div>
<div class="dl" style="left:153.94px;top:595.42px;width:324.84px">本院认为，被告人张威故意非法剥夺他人生命，其行为已构成故</div>
<div class="dl" style="left:129.60px;top:615.79px;width:348.05px">意杀人罪，强行与妇女发生性关系，其行为已构成强奸罪，应依法数</div>

<div id="vsc" style="left:0;width:1170px;background:none;clip-path:inset(0 0 0 683.6px)">
<div class="abs" style="left:684px;top:0;width:486px;height:621px;background:#1f1f1f"></div>
<!-- title bar -->
<div class="abs" style="left:684px;top:0;width:486px;height:22.6px;background:#3d3d3d"></div>
<div class="abs" style="left:650px;top:-4px;width:295px;height:22px;background:#484848;border:1px solid #565656;border-radius:4px"></div>
<svg class="ico" style="left:760.5px;top:2.5px" width="12" height="12" viewBox="0 0 12 12"><circle cx="7.3" cy="4.5" r="3.6" fill="none" stroke="#c4c4c4" stroke-width="1"/><path d="M4.7 7.2L0.8 11.2" stroke="#c4c4c4" stroke-width="1.1"/></svg>
<div class="ui" style="left:777px;top:2px;height:14px;line-height:14px;font-size:10.3px;color:#bcbcbc">罪名预测4</div>
<svg class="ico" style="left:1000px;top:2px" width="82" height="12" viewBox="0 0 82 12" fill="none" stroke="#c8c8c8" stroke-width="1"><rect x="0.5" y="0.8" width="11" height="10.4" rx="1.5"/><path d="M4.3 0.8v10.4"/><rect x="23.2" y="0.8" width="11" height="10.4" rx="1.5"/><rect x="23.7" y="6.6" width="10" height="4.2" fill="#c8c8c8" stroke="none"/><rect x="46.1" y="0.8" width="11" height="10.4" rx="1.5"/><path d="M53.4 0.8v10.4"/><rect x="69.5" y="0.8" width="4.4" height="10.4" rx="1"/><rect x="76.3" y="0.8" width="3.6" height="3.6" rx="1"/><rect x="76.3" y="7.6" width="3.6" height="3.6" rx="1"/></svg>
<div class="abs" style="left:1096px;top:8px;width:7px;height:1px;background:#bdbdbd"></div>
<div class="abs" style="left:1124px;top:4.5px;width:7px;height:7px;border:1px solid #bdbdbd"></div>
<svg class="ico" style="left:1151.5px;top:4.5px" width="7" height="7" viewBox="0 0 7 7"><path d="M0.3 0.3l6.4 6.4M6.7 0.3L0.3 6.7" stroke="#bdbdbd" stroke-width=".9"/></svg>
<!-- tab row -->
<div class="abs" style="left:684px;top:22.6px;width:395px;height:31.4px;background:#3a3a3a"></div>
<div class="abs" style="left:1079px;top:22.6px;width:91px;height:31.4px;background:#232323"></div>
<div class="abs" style="left:736.5px;top:22.6px;width:1px;height:31.4px;background:#303030"></div>
<div class="abs" style="left:850px;top:22.6px;width:124px;height:31.4px;background:#1f1f1f"></div>
<div class="ui" style="left:684px;top:32px;height:15px;line-height:15px;color:#e2887a;font-size:11.4px">py 9+</div>
<svg class="ico py" style="left:748.5px;top:34px" width="11" height="11" viewBox="0 0 11 11"><path d="M5.4 0.4c-2 0-2.4.8-2.4 1.6v1.2h2.6v.5H1.9C.9 3.7.3 4.5.3 5.7s.6 2 1.5 2h1V6.4c0-.9.8-1.6 1.7-1.6h2.4c.7 0 1.3-.6 1.3-1.3V2C8.200 1 7.400.4 5.400.4z" fill="#4b8bbe"/><path d="M5.600 10.600c2 0 2.400-.8 2.400-1.600V7.800H5.400v-.5h3.700c1 0 1.600-.8 1.600-2s-.6-2-1.500-2h-1v1.300c0 .9-.8 1.600-1.700 1.600H4.100c-.7 0-1.300.6-1.300 1.300V9c0 1 .8 1.600 2.800 1.600z" fill="#5aa0d8"/></svg>
<div class="ui" style="left:765px;top:32px;height:15px;line-height:15px;color:#e2887a;font-size:11.4px">predict.py 7</div>
<svg class="ico py" style="left:862px;top:34px" width="11" height="11" viewBox="0 0 11 11"><path d="M5.4 0.4c-2 0-2.4.8-2.4 1.600v1.200h2.600v.5H1.900C.9 3.700.3 4.500.3 5.700s.6 2 1.500 2h1V6.400c0-.9.8-1.600 1.700-1.600h2.400c.7 0 1.300-.6 1.300-1.300V2C8.200 1 7.400.4 5.400.4z" fill="#4b8bbe"/><path d="M5.600 10.600c2 0 2.400-.8 2.400-1.600V7.800H5.400v-.5h3.700c1 0 1.600-.8 1.600-2s-.6-2-1.500-2h-1v1.300c0 .9-.8 1.600-1.700 1.600H4.100c-.7 0-1.300.6-1.300 1.300V9c0 1 .8 1.600 2.800 1.600z" fill="#5aa0d8"/></svg>
<div class="ui" style="left:878.3px;top:32px;height:15px;line-height:15px;color:#f08a78;font-size:11.4px">window.py 9+</div>
<svg class="ico" style="left:957.5px;top:35.5px" width="8" height="8" viewBox="0 0 8 8"><path d="M0.6 0.6l6.800 6.800M7.400 0.600L0.600 7.400" stroke="#f0f0f0" stroke-width="1.100"/></svg>
<svg class="ico" style="left:990px;top:35px" width="8" height="9" viewBox="0 0 8 9"><path d="M0 1h7.500M0 3.400h6M0 5.800h7.500M0 8.200h4.500" stroke="#cfcfcf" stroke-width="1"/></svg>
<div class="ui" style="left:1003.4px;top:32px;height:15px;line-height:15px;color:#d8d8d8;font-size:11.1px">设置</div>
<svg class="ico" style="left:1086px;top:33px" width="72" height="12" viewBox="0 0 72 12" fill="none" stroke="#d0d0d0" stroke-width="1"><path d="M2 1l8.500 5L2 11z"/><path d="M17.500 4.500l3.300 3.300 3.300-3.300"/><rect x="35.500" y="0.800" width="11" height="10.400" rx="1"/><path d="M41 0.800v10.400"/><circle cx="58.500" cy="6" r=".9" fill="#d0d0d0" stroke="none"/><circle cx="63" cy="6" r=".9" fill="#d0d0d0" stroke="none"/><circle cx="67.500" cy="6" r=".9" fill="#d0d0d0" stroke="none"/></svg>
<div class="abs" style="left:1062.2px;top:33.900px;width:30.400px;height:30.400px;border-radius:50%;background:linear-gradient(200deg,#2f7fe8,#58a8f8);border:1.600px solid #fff;color:rgba(255,255,255,.88);font-size:8.3px;line-height:30px;text-align:center">03:26</div>
<!-- breadcrumb / sticky -->
<div class="abs" style="left:684px;top:72.500px;width:409px;height:1px;background:#141414"></div>
<svg class="abs" style="left:0;top:0" width="1170" height="360" viewBox="0 0 1170 360">
<rect x="1092" y="73" width="1" height="279" fill="#151515"/>
<rect x="1105.0" y="73.30" width="12.2" height=".9" fill="#557496" opacity=".5"/><rect x="1103.0" y="77.95" width="9.3" height=".9" fill="#6c6c6c" opacity=".5"/><rect x="1107.0" y="79.50" width="4.8" height=".9" fill="#6c6c6c" opacity=".5"/><rect x="1113.0" y="79.50" width="4.5" height=".9" fill="#8a3a30" opacity=".5"/><rect x="1118.7" y="79.50" width="7.9" height=".9" fill="#557496" opacity=".5"/><rect x="1127.8" y="79.50" width="3.0" height=".9" fill="#6c6c6c" opacity=".5"/><rect x="1099.0" y="81.05" width="12.6" height=".9" fill="#8a8c62" opacity=".5"/><rect x="1112.8" y="81.05" width="6.5" height=".9" fill="#557496" opacity=".5"/><rect x="1105.0" y="82.60" width="13.4" height=".9" fill="#8a3a30" opacity=".5"/><rect x="1119.6" y="82.60" width="5.2" height=".9" fill="#9a5c34" opacity=".5"/><rect x="1096" y="85.40" width="61.5" height="1.3" fill="#6a1c12" opacity=".7"/><rect x="1103.0" y="85.70" width="6.7" height=".9" fill="#8a3a30" opacity=".5"/><rect x="1096" y="88.50" width="61.5" height="1.3" fill="#6a1c12" opacity=".7"/><rect x="1107.0" y="88.80" width="12.0" height=".9" fill="#9a5c34" opacity=".5"/><rect x="1120.2" y="88.80" width="10.7" height=".9" fill="#557496" opacity=".5"/><rect x="1132.1" y="88.80" width="8.3" height=".9" fill="#8a3a30" opacity=".5"/><rect x="1099.0" y="91.90" width="3.2" height=".9" fill="#9a5c34" opacity=".5"/><rect x="1103.4" y="91.90" width="7.0" height=".9" fill="#8a3a30" opacity=".5"/><rect x="1111.6" y="91.90" width="12.3" height=".9" fill="#9a5c34" opacity=".5"/><rect x="1125.1" y="91.90" width="3.5" height=".9" fill="#557496" opacity=".5"/><rect x="1096" y="93.15" width="61.5" height="1.3" fill="#6a1c12" opacity=".7"/><rect x="1105.0" y="93.45" width="13.2" height=".9" fill="#9a5c34" opacity=".5"/><rect x="1119.4" y="93.45" width="6.8" height=".9" fill="#8a8c62" opacity=".5"/><rect x="1105.0" y="95.00" width="12.5" height=".9" fill="#6c6c6c" opacity=".5"/><rect x="1118.7" y="95.00" width="7.8" height=".9" fill="#6c6c6c" opacity=".5"/><rect x="1127.6" y="95.00" width="5.3" height=".9" fill="#8a3a30" opacity=".5"/><rect x="1096" y="96.25" width="61.5" height="1.3" fill="#6a1c12" opacity=".7"/><rect x="1105.0" y="96.55" width="13.2" height=".9" fill="#8a3a30" opacity=".5"/><rect x="1119.4" y="96.55" width="4.0" height=".9" fill="#8a3a30" opacity=".5"/><rect x="1124.6" y="96.55" width="6.5" height=".9" fill="#557496" opacity=".5"/><rect x="1099.0" y="98.10" width="14.0" height=".9" fill="#557496" opacity=".5"/><rect x="1114.2" y="98.10" width="10.9" height=".9" fill="#6c6c6c" opacity=".5"/><rect x="1126.3" y="98.10" width="13.9" height=".9" fill="#8a3a30" opacity=".5"/><rect x="1107.0" y="101.20" width="10.2" height=".9" fill="#557496" opacity=".5"/><rect x="1118.4" y="101.20" width="3.6" height=".9" fill="#8a3a30" opacity=".5"/><rect x="1123.2" y="101.20" width="3.4" height=".9" fill="#9a5c34" opacity=".5"/><rect x="1127.7" y="101.20" width="6.7" height=".9" fill="#557496" opacity=".5"/><rect x="1099.0" y="102.75" width="9.9" height=".9" fill="#9a5c34" opacity=".5"/><rect x="1110.1" y="102.75" width="4.2" height=".9" fill="#9a5c34" opacity=".5"/><rect x="1101.0" y="104.30" width="4.6" height=".9" fill="#8a3a30" opacity=".5"/><rect x="1106.8" y="104.30" width="12.4" height=".9" fill="#8a3a30" opacity=".5"/><rect x="1120.3" y="104.30" width="8.0" height=".9" fill="#9a5c34" opacity=".5"/><rect x="1107.0" y="105.85" width="8.2" height=".9" fill="#557496" opacity=".5"/><rect x="1116.4" y="105.85" width="4.2" height=".9" fill="#8a3a30" opacity=".5"/><rect x="1121.8" y="105.85" width="13.6" height=".9" fill="#8a3a30" opacity=".5"/><rect x="1096" y="107.10" width="61.5" height="1.3" fill="#6a1c12" opacity=".7"/><rect x="1103.0" y="107.40" width="6.0" height=".9" fill="#8a3a30" opacity=".5"/><rect x="1110.2" y="107.40" width="12.5" height=".9" fill="#8a8c62" opacity=".5"/><rect x="1123.9" y="107.40" width="3.7" height=".9" fill="#8a8c62" opacity=".5"/><rect x="1128.8" y="107.40" width="10.6" height=".9" fill="#8a3a30" opacity=".5"/><rect x="1099.0" y="108.95" width="12.2" height=".9" fill="#8a8c62" opacity=".5"/><rect x="1112.4" y="108.95" width="11.5" height=".9" fill="#8a3a30" opacity=".5"/><rect x="1125.1" y="108.95" width="10.9" height=".9" fill="#8a8c62" opacity=".5"/><rect x="1107.0" y="110.50" width="9.0" height=".9" fill="#8a8c62" opacity=".5"/><rect x="1117.2" y="110.50" width="6.6" height=".9" fill="#8a8c62" opacity=".5"/><rect x="1125.0" y="110.50" width="8.1" height=".9" fill="#8a3a30" opacity=".5"/><rect x="1134.3" y="110.50" width="10.1" height=".9" fill="#8a8c62" opacity=".5"/><rect x="1101.0" y="112.05" width="6.9" height=".9" fill="#557496" opacity=".5"/><rect x="1109.1" y="112.05" width="12.6" height=".9" fill="#8a3a30" opacity=".5"/><rect x="1122.8" y="112.05" width="7.9" height=".9" fill="#8a8c62" opacity=".5"/><rect x="1132.0" y="112.05" width="13.5" height=".9" fill="#8a3a30" opacity=".5"/><rect x="1096" y="113.30" width="61.5" height="1.3" fill="#6a1c12" opacity=".7"/><rect x="1099.0" y="113.60" width="13.3" height=".9" fill="#9a5c34" opacity=".5"/><rect x="1113.5" y="113.60" width="6.1" height=".9" fill="#6c6c6c" opacity=".5"/><rect x="1120.8" y="113.60" width="10.9" height=".9" fill="#8a3a30" opacity=".5"/><rect x="1103.0" y="115.15" width="6.3" height=".9" fill="#8a3a30" opacity=".5"/><rect x="1110.5" y="115.15" width="11.5" height=".9" fill="#8a3a30" opacity=".5"/><rect x="1123.3" y="115.15" width="6.0" height=".9" fill="#6c6c6c" opacity=".5"/><rect x="1130.4" y="115.15" width="5.2" height=".9" fill="#8a3a30" opacity=".5"/><rect x="1096" y="116.40" width="61.5" height="1.3" fill="#6a1c12" opacity=".7"/><rect x="1103.0" y="116.70" width="9.9" height=".9" fill="#6c6c6c" opacity=".5"/><rect x="1114.1" y="116.70" width="13.9" height=".9" fill="#557496" opacity=".5"/><rect x="1099.0" y="121.35" width="8.1" height=".9" fill="#9a5c34" opacity=".5"/><rect x="1108.3" y="121.35" width="10.3" height=".9" fill="#6c6c6c" opacity=".5"/><rect x="1119.8" y="121.35" width="9.5" height=".9" fill="#557496" opacity=".5"/><rect x="1130.5" y="121.35" width="10.9" height=".9" fill="#8a8c62" opacity=".5"/><rect x="1099.0" y="122.90" width="12.5" height=".9" fill="#8a3a30" opacity=".5"/><rect x="1112.7" y="122.90" width="12.1" height=".9" fill="#8a8c62" opacity=".5"/><rect x="1126.1" y="122.90" width="13.6" height=".9" fill="#8a3a30" opacity=".5"/><rect x="1099.0" y="124.45" width="13.5" height=".9" fill="#557496" opacity=".5"/><rect x="1113.7" y="124.45" width="7.6" height=".9" fill="#8a3a30" opacity=".5"/><rect x="1122.6" y="124.45" width="10.1" height=".9" fill="#8a8c62" opacity=".5"/><rect x="1103.0" y="126.00" width="13.5" height=".9" fill="#557496" opacity=".5"/><rect x="1117.7" y="126.00" width="9.7" height=".9" fill="#8a8c62" opacity=".5"/><rect x="1128.6" y="126.00" width="12.0" height=".9" fill="#8a3a30" opacity=".5"/><rect x="1141.9" y="126.00" width="3.0" height=".9" fill="#6c6c6c" opacity=".5"/><rect x="1101.0" y="127.55" width="6.6" height=".9" fill="#8a3a30" opacity=".5"/><rect x="1108.8" y="127.55" width="7.1" height=".9" fill="#9a5c34" opacity=".5"/><rect x="1099.0" y="129.10" width="7.2" height=".9" fill="#557496" opacity=".5"/><rect x="1107.4" y="129.10" width="9.6" height=".9" fill="#8a8c62" opacity=".5"/><rect x="1118.2" y="129.10" width="11.2" height=".9" fill="#8a8c62" opacity=".5"/><rect x="1130.5" y="129.10" width="8.5" height=".9" fill="#9a5c34" opacity=".5"/><rect x="1099.0" y="130.65" width="13.2" height=".9" fill="#557496" opacity=".5"/><rect x="1113.4" y="130.65" width="8.2" height=".9" fill="#6c6c6c" opacity=".5"/><rect x="1122.9" y="130.65" width="10.3" height=".9" fill="#9a5c34" opacity=".5"/><rect x="1134.3" y="130.65" width="5.7" height=".9" fill="#6c6c6c" opacity=".5"/><rect x="1096" y="131.90" width="61.5" height="1.3" fill="#6a1c12" opacity=".7"/><rect x="1099.0" y="132.20" width="5.7" height=".9" fill="#9a5c34" opacity=".5"/><rect x="1105.9" y="132.20" width="11.6" height=".9" fill="#557496" opacity=".5"/><rect x="1118.7" y="132.20" width="8.4" height=".9" fill="#557496" opacity=".5"/><rect x="1107.0" y="133.75" width="8.7" height=".9" fill="#8a3a30" opacity=".5"/><rect x="1116.9" y="133.75" width="12.7" height=".9" fill="#6c6c6c" opacity=".5"/><rect x="1130.8" y="133.75" width="3.2" height=".9" fill="#557496" opacity=".5"/><rect x="1135.2" y="133.75" width="6.3" height=".9" fill="#8a3a30" opacity=".5"/><rect x="1107.0" y="135.30" width="8.1" height=".9" fill="#8a8c62" opacity=".5"/><rect x="1107.0" y="136.85" width="3.0" height=".9" fill="#8a3a30" opacity=".5"/><rect x="1096" y="138.10" width="61.5" height="1.3" fill="#6a1c12" opacity=".7"/><rect x="1103.0" y="138.40" width="3.2" height=".9" fill="#9a5c34" opacity=".5"/><rect x="1107.4" y="138.40" width="9.5" height=".9" fill="#8a3a30" opacity=".5"/><rect x="1107.0" y="139.95" width="8.2" height=".9" fill="#8a3a30" opacity=".5"/><rect x="1116.4" y="139.95" width="12.4" height=".9" fill="#557496" opacity=".5"/><rect x="1130.0" y="139.95" width="12.9" height=".9" fill="#9a5c34" opacity=".5"/><rect x="1096" y="141.20" width="61.5" height="1.3" fill="#6a1c12" opacity=".7"/><rect x="1099.0" y="141.50" width="9.4" height=".9" fill="#8a3a30" opacity=".5"/><rect x="1109.6" y="141.50" width="11.6" height=".9" fill="#8a8c62" opacity=".5"/><rect x="1122.4" y="141.50" width="4.6" height=".9" fill="#9a5c34" opacity=".5"/><rect x="1128.2" y="141.50" width="10.6" height=".9" fill="#9a5c34" opacity=".5"/><rect x="1101.0" y="143.05" width="3.8" height=".9" fill="#557496" opacity=".5"/><rect x="1101.0" y="144.60" width="6.7" height=".9" fill="#9a5c34" opacity=".5"/><rect x="1099.0" y="146.15" width="4.4" height=".9" fill="#6c6c6c" opacity=".5"/><rect x="1099.0" y="147.70" width="10.8" height=".9" fill="#557496" opacity=".5"/><rect x="1101.0" y="149.25" width="9.7" height=".9" fill="#9a5c34" opacity=".5"/><rect x="1111.9" y="149.25" width="11.8" height=".9" fill="#6c6c6c" opacity=".5"/><rect x="1105.0" y="150.80" width="11.2" height=".9" fill="#8a8c62" opacity=".5"/><rect x="1117.4" y="150.80" width="3.6" height=".9" fill="#8a3a30" opacity=".5"/><rect x="1122.2" y="150.80" width="4.3" height=".9" fill="#9a5c34" opacity=".5"/><rect x="1127.7" y="150.80" width="12.7" height=".9" fill="#557496" opacity=".5"/><rect x="1099.0" y="152.35" width="8.4" height=".9" fill="#8a3a30" opacity=".5"/><rect x="1108.6" y="152.35" width="7.1" height=".9" fill="#6c6c6c" opacity=".5"/><rect x="1116.9" y="152.35" width="4.5" height=".9" fill="#8a8c62" opacity=".5"/><rect x="1122.6" y="152.35" width="4.7" height=".9" fill="#8a3a30" opacity=".5"/><rect x="1107.0" y="153.90" width="5.9" height=".9" fill="#8a3a30" opacity=".5"/><rect x="1114.1" y="153.90" width="5.6" height=".9" fill="#8a8c62" opacity=".5"/><rect x="1105.0" y="155.45" width="8.0" height=".9" fill="#9a5c34" opacity=".5"/><rect x="1114.2" y="155.45" width="5.0" height=".9" fill="#8a3a30" opacity=".5"/><rect x="1120.4" y="155.45" width="3.2" height=".9" fill="#8a8c62" opacity=".5"/><rect x="1096" y="156.70" width="61.5" height="1.3" fill="#6a1c12" opacity=".7"/><rect x="1099.0" y="157.00" width="8.6" height=".9" fill="#9a5c34" opacity=".5"/><rect x="1099.0" y="158.55" width="4.2" height=".9" fill="#8a3a30" opacity=".5"/><rect x="1104.4" y="158.55" width="3.3" height=".9" fill="#8a3a30" opacity=".5"/><rect x="1108.9" y="158.55" width="7.2" height=".9" fill="#557496" opacity=".5"/><rect x="1103.0" y="160.10" width="3.9" height=".9" fill="#8a3a30" opacity=".5"/><rect x="1096" y="161.35" width="61.5" height="1.3" fill="#6a1c12" opacity=".7"/><rect x="1103.0" y="161.65" width="6.9" height=".9" fill="#557496" opacity=".5"/><rect x="1111.1" y="161.65" width="6.2" height=".9" fill="#8a3a30" opacity=".5"/><rect x="1118.5" y="161.65" width="10.8" height=".9" fill="#9a5c34" opacity=".5"/><rect x="1130.4" y="161.65" width="7.2" height=".9" fill="#8a3a30" opacity=".5"/><rect x="1101.0" y="163.20" width="13.6" height=".9" fill="#8a8c62" opacity=".5"/><rect x="1115.8" y="163.20" width="8.7" height=".9" fill="#8a3a30" opacity=".5"/><rect x="1125.7" y="163.20" width="13.9" height=".9" fill="#557496" opacity=".5"/><rect x="1099.0" y="167.85" width="10.3" height=".9" fill="#8a8c62" opacity=".5"/><rect x="1110.5" y="167.85" width="3.0" height=".9" fill="#9a5c34" opacity=".5"/><rect x="1114.7" y="167.85" width="6.3" height=".9" fill="#8a3a30" opacity=".5"/><rect x="1122.2" y="167.85" width="13.1" height=".9" fill="#8a8c62" opacity=".5"/><rect x="1096" y="169.10" width="61.5" height="1.3" fill="#6a1c12" opacity=".7"/><rect x="1103.0" y="169.40" width="3.8" height=".9" fill="#9a5c34" opacity=".5"/><rect x="1108.0" y="169.40" width="12.6" height=".9" fill="#9a5c34" opacity=".5"/><rect x="1096" y="170.65" width="61.5" height="1.3" fill="#6a1c12" opacity=".7"/><rect x="1099.0" y="170.95" width="11.3" height=".9" fill="#8a3a30" opacity=".5"/><rect x="1111.5" y="170.95" width="5.6" height=".9" fill="#9a5c34" opacity=".5"/><rect x="1099.0" y="172.50" width="13.3" height=".9" fill="#8a3a30" opacity=".5"/><rect x="1113.5" y="172.50" width="3.2" height=".9" fill="#9a5c34" opacity=".5"/><rect x="1118.0" y="172.50" width="8.2" height=".9" fill="#557496" opacity=".5"/><rect x="1099.0" y="174.05" width="10.4" height=".9" fill="#8a3a30" opacity=".5"/><rect x="1110.6" y="174.05" width="13.9" height=".9" fill="#6c6c6c" opacity=".5"/><rect x="1125.7" y="174.05" width="5.2" height=".9" fill="#6c6c6c" opacity=".5"/><rect x="1132.2" y="174.05" width="9.3" height=".9" fill="#8a3a30" opacity=".5"/><rect x="1099.0" y="175.60" width="10.5" height=".9" fill="#557496" opacity=".5"/><rect x="1110.7" y="175.60" width="8.1" height=".9" fill="#8a8c62" opacity=".5"/><rect x="1120.0" y="175.60" width="3.7" height=".9" fill="#8a3a30" opacity=".5"/><rect x="1103.0" y="177.15" width="13.3" height=".9" fill="#8a3a30" opacity=".5"/><rect x="1117.5" y="177.15" width="9.7" height=".9" fill="#8a3a30" opacity=".5"/><rect x="1099.0" y="180.25" width="3.5" height=".9" fill="#8a3a30" opacity=".5"/><rect x="1103.7" y="180.25" width="12.2" height=".9" fill="#8a3a30" opacity=".5"/><rect x="1096" y="181.50" width="61.5" height="1.3" fill="#6a1c12" opacity=".7"/><rect x="1105.0" y="181.80" width="5.6" height=".9" fill="#9a5c34" opacity=".5"/><rect x="1096" y="183.05" width="61.5" height="1.3" fill="#6a1c12" opacity=".7"/><rect x="1099.0" y="183.35" width="10.1" height=".9" fill="#9a5c34" opacity=".5"/><rect x="1110.3" y="183.35" width="7.4" height=".9" fill="#6c6c6c" opacity=".5"/><rect x="1099.0" y="184.90" width="10.0" height=".9" fill="#6c6c6c" opacity=".5"/><rect x="1110.2" y="184.90" width="13.5" height=".9" fill="#557496" opacity=".5"/><rect x="1124.9" y="184.90" width="5.0" height=".9" fill="#8a3a30" opacity=".5"/><rect x="1107.0" y="186.45" width="13.2" height=".9" fill="#6c6c6c" opacity=".5"/><rect x="1099.0" y="188.00" width="12.4" height=".9" fill="#557496" opacity=".5"/><rect x="1105.0" y="191.10" width="8.7" height=".9" fill="#557496" opacity=".5"/><rect x="1114.9" y="191.10" width="11.0" height=".9" fill="#8a8c62" opacity=".5"/><rect x="1127.1" y="191.10" width="10.6" height=".9" fill="#557496" opacity=".5"/><rect x="1138.9" y="191.10" width="9.1" height=".9" fill="#557496" opacity=".5"/><rect x="1101.0" y="192.65" width="12.0" height=".9" fill="#8a8c62" opacity=".5"/><rect x="1114.2" y="192.65" width="4.5" height=".9" fill="#8a3a30" opacity=".5"/><rect x="1119.9" y="192.65" width="3.9" height=".9" fill="#557496" opacity=".5"/><rect x="1103.0" y="195.75" width="3.7" height=".9" fill="#8a3a30" opacity=".5"/><rect x="1107.9" y="195.75" width="5.7" height=".9" fill="#8a3a30" opacity=".5"/><rect x="1114.8" y="195.75" width="5.2" height=".9" fill="#8a8c62" opacity=".5"/><rect x="1096" y="197.00" width="61.5" height="1.3" fill="#6a1c12" opacity=".7"/><rect x="1101.0" y="197.30" width="7.2" height=".9" fill="#8a3a30" opacity=".5"/><rect x="1109.4" y="197.30" width="3.0" height=".9" fill="#8a8c62" opacity=".5"/><rect x="1113.6" y="197.30" width="10.2" height=".9" fill="#557496" opacity=".5"/><rect x="1099.0" y="200.40" width="11.0" height=".9" fill="#8a3a30" opacity=".5"/><rect x="1103.0" y="201.95" width="9.2" height=".9" fill="#8a8c62" opacity=".5"/><rect x="1113.4" y="201.95" width="3.7" height=".9" fill="#557496" opacity=".5"/><rect x="1118.3" y="201.95" width="4.5" height=".9" fill="#9a5c34" opacity=".5"/><rect x="1124.0" y="201.95" width="10.4" height=".9" fill="#8a8c62" opacity=".5"/><rect x="1096" y="204.75" width="61.5" height="1.3" fill="#6a1c12" opacity=".7"/><rect x="1107.0" y="205.05" width="13.7" height=".9" fill="#8a8c62" opacity=".5"/><rect x="1096" y="138" width="61.5" height="3.5" fill="#7a4410" opacity=".75"/>
<rect x="1157.5" y="73" width="1" height="279" fill="#383838"/>
<rect x="1158.5" y="286" width="11.5" height="37" fill="#4a4a4a"/>
<rect x="1158.5" y="97" width="11.5" height="1" fill="#a89030"/>
<rect x="1165.5" y="74" width="4.5" height="4" fill="#d0483a"/><rect x="1165.5" y="114.5" width="4.5" height="4" fill="#c8432f"/><rect x="1165.5" y="130" width="4.5" height="4" fill="#c8432f"/><rect x="1165.5" y="166" width="4.5" height="4" fill="#c8432f"/><rect x="1165.5" y="194" width="4.5" height="13" fill="#e8601e"/><rect x="1165.5" y="223.5" width="4.5" height="4" fill="#c8432f"/><rect x="1165.5" y="245" width="4.5" height="5" fill="#c8432f"/><rect x="1165.5" y="260" width="4.5" height="4" fill="#c8432f"/><rect x="1165.5" y="269.5" width="4.5" height="3" fill="#c8432f"/><rect x="1165.5" y="276.5" width="4.5" height="4" fill="#c8432f"/><rect x="1165.5" y="292.5" width="4.5" height="3" fill="#a8473c"/><rect x="1165.5" y="299.5" width="4.5" height="3" fill="#a8473c"/><rect x="1165.5" y="305" width="4.5" height="4" fill="#a8473c"/>
</svg>
<!-- code -->
<div id="code" class="abs" style="left:0;top:0;width:1092px;height:352px;overflow:hidden">
<div class="code" style="left:678.40px;top:77.70px"><span class="r">e</span><span class="o">.is_available</span> <span class="k">else</span> <span class="s">"cpu"</span></div>
<div class="code" style="left:678.40px;top:94.35px"><span class="s">ation_type_list.pkl'</span><span class="p">,</span> <span class="b">mode</span><span class="p">=</span><span class="s">'rb'</span><span class="y">)</span> <span class="k">as</span> <span class="b">f</span><span class="p">:</span></div>
<div class="code" style="left:678.40px;top:111.00px"><span class="r">ickle</span><span class="o">.load</span><span class="y">(</span><span class="b">f</span><span class="y">)</span></div>
<div class="code" style="left:678.40px;top:127.65px"><span class="s">odel/model_dict_26_acc_0.646640826873385.pth'</span><span class="p">,</span><span class="b sq">map_location</span><span class="p">=</span><span class="r">to</span></div>
<div class="code" style="left:684.90px;top:160.95px"><span class="b">num_channels</span> <span class="p">=</span> <span class="n">400</span><span class="p">,</span> <span class="y">[</span><span class="n">3</span><span class="p">,</span> <span class="n">4</span><span class="p">,</span> <span class="n">5</span><span class="y">]</span><span class="p">,</span> <span class="y">[</span><span class="n">300</span><span class="p">,</span> <span class="n">300</span><span class="p">,</span> <span class="n">300</span><span class="y">]</span></div>
<div class="code" style="left:691.31px;top:177.60px"><span class="b">vocab_size, kernel_sizes</span><span class="p">,</span> <span class="b">num_channels</span><span class="y">)</span><span class="o">.to</span><span class="y">(</span><span class="b sq">device</span><span class="y">)</span></div>
<div class="code" style="left:698.04px;top:260.85px"><span class="b">accusation_type_list</span><span class="y">)</span></div>
</div>
<!-- h-scrollbar -->
<div class="abs" style="left:684px;top:342px;width:288px;height:10px;background:#474747"></div>
<div class="abs" style="left:684px;top:352px;width:486px;height:1px;background:#333"></div>
<!-- panel header -->
<svg class="ico" style="left:961px;top:362px" width="200" height="14" viewBox="0 0 200 14" fill="none" stroke="#d0d0d0" stroke-width="1"><path d="M7 1.500v11M1.500 7h11"/><path d="M18 5.500l3 3 3-3"/><rect x="35" y="2" width="13" height="10" rx="1"/><path d="M35 4.500h13"/><rect x="92.500" y="2" width="11" height="10" rx="1"/><path d="M98 2v10"/><path d="M115 3.500h10M118 3.500v-1.500h4v1.500M116.500 3.500l.6 9h5.800l.6-9M119 5.500v5M121 5.500v5"/><circle cx="138.500" cy="7" r=".9" fill="#d0d0d0" stroke="none"/><circle cx="143" cy="7" r=".9" fill="#d0d0d0" stroke="none"/><circle cx="147.500" cy="7" r=".9" fill="#d0d0d0" stroke="none"/><path d="M162 9l4-4 4 4"/><path d="M185 3l8 8M193 3l-8 8"/></svg>
<div class="ui" style="left:997.500px;top:365.500px;font-size:4.500px;color:#d0d0d0;line-height:6px">C:\</div>
<div class="ui" style="left:1013px;top:362px;height:14px;line-height:14px;font-size:10.200px;color:#d4d4d4">Python</div>
<div class="term" style="left:684.00px;top:405.70px">.</div>
<div class="term" style="left:683.00px;top:435.60px"><span style="letter-spacing:1.900px">综合作业\罪名预测</span>4&gt;D:/Anaconda/envs/Tensorflow/python.exe d:/lsl/cours</div>
<div class="term" style="left:683.00px;top:450.70px">.py</div>
<div class="term" style="left:683.50px;top:465.70px">ictionary ...</div>
<div class="term" style="left:683.30px;top:481.20px">T~1\AppData\Local\Temp\jieba.cache</div>
<div class="term" style="left:684.00px;top:512.70px">.</div>
<!-- status bar -->
<div class="abs" style="left:684px;top:603px;width:486px;height:18px;background:#4b4b4b"></div>
<div class="sb" style="left:724px">行 12，列 1</div>
<div class="sb" style="left:791px">空格: 4</div>
<div class="sb" style="left:838px">UTF-8</div>
<div class="sb" style="left:880px;letter-spacing:-.5px">CRLF</div>
<div class="sb" style="left:915.500px;font-size:9.500px">{<span style="font-size:6px;vertical-align:-1px">●</span></div>
<div class="sb" style="left:932px">Python</div>
<div class="sb" style="left:979px">3.9.16 ('Tensorflow': conda)</div>
<svg class="ico" style="left:1118px;top:606.500px" width="12" height="11" viewBox="0 0 12 11" fill="none" stroke="#f0f0f0" stroke-width="1"><path d="M3 1h8v5.500H8.500L7 8V6.500H6"/><circle cx="3.300" cy="5" r="1.500"/><path d="M0.800 10.500c0-2 1-3 2.500-3s2.500 1 2.500 3"/></svg>
<svg class="ico" style="left:1146px;top:606px" width="10" height="12" viewBox="0 0 10 12" fill="none" stroke="#f0f0f0" stroke-width="1"><path d="M5 1a3.200 3.200 0 0 0-3.200 3.200V7L0.800 9h8.400l-1-2V4.200A3.200 3.200 0 0 0 5 1z"/><path d="M3.800 10.200a1.200 1.200 0 0 0 2.400 0"/></svg>
</div>

<div id="tk">
  <div class="abs" style="left:0;top:0;width:100%;height:18.2px;background:#eef3fa"></div>
  <svg class="ico" style="left:6.5px;top:4.5px" width="7" height="10" viewBox="0 0 7 10"><path d="M6.300 0.300C3.500 0.800 1.600 3 1.400 6.200L0.500 9.600l.7.1.7-2.400C4.600 6.800 6.300 4 6.300 0.300z" fill="#3a4d78"/><path d="M1.600 7.200L5.600 1.500" stroke="#9fb0d0" stroke-width=".5"/></svg>
  <div class="abs" style="left:18px;top:3px;height:13px;line-height:13px;font-size:7.800px;color:#222">tk</div>
  <div class="abs" style="left:202px;top:8.500px;width:6px;height:1px;background:#444"></div>
  <div class="abs" style="left:229px;top:5.500px;width:6.400px;height:6.400px;border:1px solid #333;border-radius:1px"></div>
  <svg class="ico" style="left:256.500px;top:5.300px" width="7" height="7" viewBox="0 0 7 7"><path d="M0.300 0.300l6.400 6.400M6.700 0.300L0.300 6.700" stroke="#333" stroke-width=".9"/></svg>
  <div class="abs" style="left:8.300px;top:18.200px;width:257.500px;height:97.300px;background:#fff;border-left:1px solid #8a8a8a;border-top:1px solid #8a8a8a"></div>
  <div class="abs" style="left:114px;top:115.500px;width:46.200px;height:24px;background:#ffa500"></div>
  <div class="abs" style="left:119.200px;top:141px;width:34.800px;height:16.500px;background:#f0f0f0;border:1px solid #adadad;border-right-color:#dcdcdc;border-bottom-color:#dcdcdc;font-size:7.300px;line-height:14.500px;text-align:center;color:#111;white-space:nowrap;font-weight:500">判断罪名</div>
</div>
<div class="tl" style="left:517.2px;top:190.30px;width:209.51px">被告人张威与被害人王某<span class="td">1</span>（殁年<span class="td">27</span>岁）均系河北省文安县<span class="fw">×</span><span class="fw">×</span>镇<span class="fw">×</span></div>
<div class="tl" style="left:517.2px;top:198.20px;width:209.51px"><span class="fw">×</span>村村民。<span class="td">2020</span>年<span class="td">11</span>月<span class="td">30</span>日<span class="td">16</span>时许，张威酒后至王某<span class="td">1</span>家，在西卧室</div>
<div class="tl" style="left:517.2px;top:206.10px;width:209.51px">强行撩起王某<span class="td">1</span>之母郝某（被害人，时年<span class="td">54</span>岁，肢体三级残疾）的上</div>
<div class="tl" style="left:517.2px;top:214.00px;width:213.06px">衣摸其胸部，同在该屋的王某<span class="td">1</span>予以阻止，张威对王某<span class="td">1</span>进行殴打并踢</div>
<div class="tl" style="left:517.2px;top:221.90px;width:213.06px">踹王某<span class="td">1</span>头部致王某<span class="td">1</span>昏迷。张威将郝某按倒在床上，欲与其发生性关</div>
<div class="tl" style="left:517.2px;top:229.80px;width:209.51px">系未能得逞。王某<span class="td">1</span>醒来后，张威又采用掐颈部、用枕头捂压面部等</div>
<div class="tl" style="left:517.2px;top:237.70px;width:209.51px">方式对王某<span class="td">1</span>进行殴打，还折断筷子刺扎王某<span class="td">1</span>颈部，致王某<span class="td">1</span>被扼死</div>
<div class="tl" style="left:517.2px;top:245.60px;width:113.63px">。后郝某呼救，张威跳窗逃离现场。</div>
<div class="abs" style="left:652.6px;top:246.5px;width:1px;height:7.5px;background:#000"></div>
<svg class="ico" style="left:696.500px;top:266.500px" width="8" height="12" viewBox="0 0 8 12"><path d="M0.500 0.500v9.600l2.300-2.100 1.500 3.400 1.400-.6-1.500-3.300h3.100z" fill="#fff" stroke="#222" stroke-width=".8" stroke-linejoin="round"/></svg>
<div id="taskbar"><div class="abs" style="left:674px;top:2px;width:22px;height:4px;background:#2c3b50;border-radius:1px 1px 0 0"></div></div>
</body>
</html>
